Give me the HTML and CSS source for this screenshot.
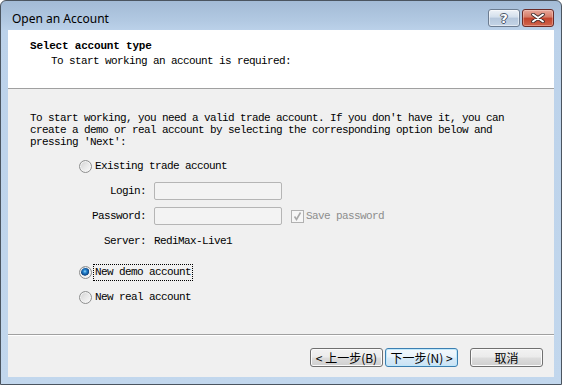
FILE: index.html
```html
<!DOCTYPE html>
<html lang="en">
<head>
    <meta charset="UTF-8">
    <title>Open an Account</title>
    <link rel="stylesheet" href="styles.css">
</head>
<body>
    <div class="window">
        <div class="titlebar">
            <span class="title">Open an Account</span>
            <div class="caption-buttons">
                <span class="cap-btn help">?</span>
                <span class="cap-btn close">
                    <svg width="14" height="10" viewBox="0 0 14 10">
                        <path d="M2 1.5 L12 8.5 M12 1.5 L2 8.5" stroke="#3a2a2a" stroke-width="3.6" stroke-linecap="round"/>
                        <path d="M2 1.5 L12 8.5 M12 1.5 L2 8.5" stroke="#ffffff" stroke-width="2" stroke-linecap="round"/>
                    </svg>
                </span>
            </div>
        </div>

        <div class="client">
            <div class="header">
                <div class="head-title">Select account type</div>
                <div class="head-sub">To start working an account is required:</div>
            </div>

            <div class="body">
                <p class="intro">To start working, you need a valid trade account. If you don't have it, you can<br>create a demo or real account by selecting the corresponding option below and<br>pressing 'Next':</p>

                <div class="options">
                    <label class="option">
                        <input type="radio" name="acc" class="radio">
                        <span class="option-text">Existing trade account</span>
                    </label>

                    <div class="fields">
                        <span class="field-label">Login:</span>
                        <input type="text" class="field-input" disabled>
                        <span></span>

                        <span class="field-label">Password:</span>
                        <input type="password" class="field-input" disabled>
                        <span class="save">
                            <span class="checkbox">
                                <svg width="11" height="11" viewBox="0 0 11 11">
                                    <path d="M2.5 5.5 L4.5 8.5 L8.5 1.5" fill="none" stroke="#a8a8a8" stroke-width="1.6"/>
                                </svg>
                            </span>
                            Save password
                        </span>

                        <span class="field-label">Server:</span>
                        <span class="field-value">RediMax-Live1</span>
                        <span></span>
                    </div>

                    <label class="option demo">
                        <input type="radio" name="acc" class="radio" checked>
                        <span class="option-text focused">New demo account</span>
                    </label>

                    <label class="option real">
                        <input type="radio" name="acc" class="radio">
                        <span class="option-text">New real account</span>
                    </label>
                </div>
            </div>

            <div class="footer">
                <button class="btn">&lt; 上一步(B)</button>
                <button class="btn default">下一步(N) &gt;</button>
                <button class="btn cancel">取消</button>
            </div>
        </div>
    </div>
</body>
</html>
```

FILE: styles.css
```css
* {
    box-sizing: border-box;
}
body {
    margin: 0;
    width: 562px;
    height: 385px;
    overflow: hidden;
    background-color: #ffffff;
}
.window {
    width: 562px;
    height: 385px;
    border: 1px solid #4b5560;
    border-radius: 6px 6px 0 0;
    background: linear-gradient(#a3bbd6 0, #b2c9e2 20px, #bcd2ea 30px, #c2d7ed 100%);
    display: flex;
    flex-direction: column;
}
.titlebar {
    height: 29px;
    display: flex;
    justify-content: space-between;
    align-items: flex-start;
    padding: 8px 7px 0 11px;
}
.title {
    font-family: "Noto Sans", sans-serif;
    font-size: 12px;
    line-height: 16px;
    margin-top: 2px;
    color: #000000;
}
.caption-buttons {
    display: flex;
    gap: 2px;
}
.cap-btn {
    width: 32px;
    height: 18px;
    border-radius: 3px;
    display: flex;
    align-items: center;
    justify-content: center;
}
.cap-btn.help {
    border: 1px solid #6c7c90;
    background: linear-gradient(#eef2f7 0, #d3dfec 45%, #b5c7dc 50%, #c4d4e6 100%);
    box-shadow: inset 0 0 0 1px rgba(255,255,255,0.5);
    font-family: "DejaVu Sans", sans-serif;
    font-weight: bold;
    font-size: 13px;
    color: #ffffff;
    text-shadow: -1px 0 #4a5668, 1px 0 #4a5668, 0 -1px #4a5668, 0 1px #4a5668;
}
.cap-btn.close {
    border: 1px solid #6b2b27;
    background: linear-gradient(#e8a89b 0, #d57a66 45%, #c2432c 50%, #d0644c 100%);
    box-shadow: inset 0 0 0 1px rgba(255,220,210,0.4);
}
.client {
    flex: 1;
    margin: 0 7px 7px 7px;
    background-color: #f0f0f0;
    display: flex;
    flex-direction: column;
    font-family: "Liberation Mono", monospace;
    font-size: 11px;
    letter-spacing: -0.6px;
    line-height: 12px;
    color: #000000;
}
.header {
    height: 59px;
    background-color: #ffffff;
    border-bottom: 1px solid #a0a0a0;
    padding: 10px 0 0 22px;
}
.head-title {
    font-weight: bold;
    letter-spacing: -0.2px;
}
.head-sub {
    margin: 3px 0 0 21px;
}
.body {
    flex: 1;
    padding: 23px 0 0 22px;
}
.intro {
    margin: 0;
}
.options {
    margin: 9px 0 0 48px;
}
.option {
    height: 18px;
    display: flex;
    align-items: center;
}
.option.demo {
    margin-top: 13px;
}
.option.real {
    margin-top: 7px;
}
.radio {
    appearance: none;
    -webkit-appearance: none;
    width: 13px;
    height: 13px;
    margin: 0 1px 0 1px;
    border-radius: 50%;
    border: 1px solid #8e8f8f;
    background: linear-gradient(135deg, #cfcfcf 0, #e6e6e6 45%, #fbfbfb 100%);
    box-shadow: inset 0 0 0 1px #f4f4f4;
}
.radio:checked {
    background:
        radial-gradient(circle at 45% 40%, #9fdcfa 0, #2a8ad4 1.5px, #0e4f94 3.5px, #1d4f86 4px, transparent 4.5px),
        linear-gradient(135deg, #cfcfcf 0, #e6e6e6 45%, #fbfbfb 100%);
}
.option-text {
    padding: 0 1px;
    border: 1px dotted transparent;
    line-height: 15px;
}
.option-text.focused {
    border-color: #000000;
}
.fields {
    margin-top: 7px;
    display: grid;
    grid-template-columns: 68px 128px auto;
    grid-auto-rows: 18px;
    column-gap: 8px;
    row-gap: 7px;
    align-items: center;
}
.field-label {
    text-align: right;
}
.field-input {
    width: 128px;
    height: 18px;
    margin: 0;
    border: 1px solid #b5b5b5;
    border-radius: 2px;
    background-color: #f3f3f3;
}
.save {
    display: flex;
    align-items: center;
    gap: 2px;
    margin-left: 1px;
    color: #8d8d8d;
}
.checkbox {
    width: 13px;
    height: 13px;
    border: 1px solid #b1b1b1;
    background-color: #f6f6f6;
    display: flex;
    align-items: center;
    justify-content: center;
}
.footer {
    height: 43px;
    border-top: 1px solid #a0a0a0;
    box-shadow: inset 0 1px #ffffff;
    display: flex;
    justify-content: flex-end;
    align-items: flex-start;
    gap: 2px;
    padding: 13px 11px 0 0;
}
.btn {
    width: 73px;
    height: 19px;
    padding: 0;
    border: 1px solid #707070;
    border-radius: 3px;
    background: linear-gradient(#f2f2f2 0, #ebebeb 48%, #dddddd 52%, #cfcfcf 100%);
    box-shadow: inset 0 0 0 1px #fbfbfb;
    font-family: "Noto Sans CJK SC", sans-serif;
    font-size: 12px;
    line-height: 16px;
    color: #000000;
}
.btn.default {
    border-color: #3c7fb1;
    box-shadow: inset 0 0 0 1px #bfe8fb;
    background: linear-gradient(#f4f9fd 0, #e8f3fb 48%, #d8ebf8 52%, #cbe2f4 100%);
}
.btn.cancel {
    margin-left: 10px;
}
```
